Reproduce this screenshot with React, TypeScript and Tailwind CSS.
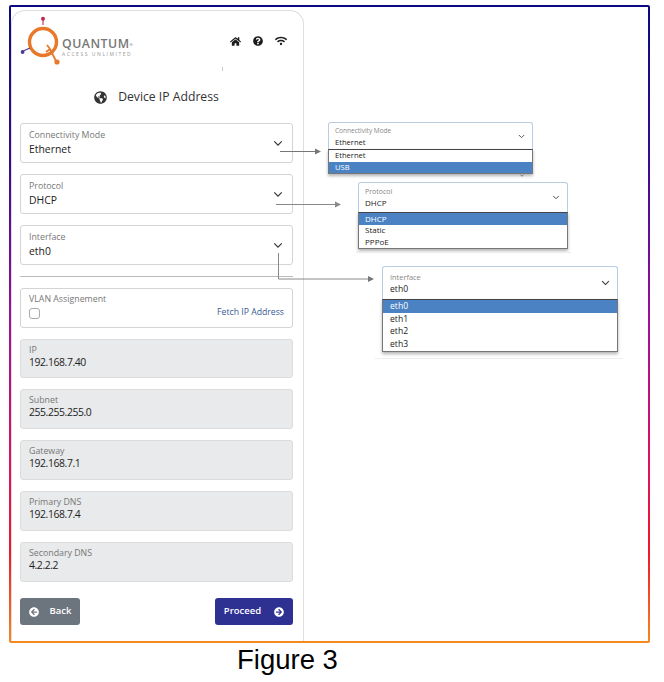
import React from 'react';
import { FaHome, FaQuestionCircle, FaWifi, FaGlobeAmericas, FaArrowCircleLeft, FaArrowCircleRight } from 'react-icons/fa';

const font = { fontFamily: '"Open Sans", sans-serif' };

const Chevron = ({ className }: { className: string }) => (
  <svg className={className} viewBox="0 0 12 8" fill="none" stroke="#333" strokeWidth="1.4">
    <path d="M1.5 1.5 6 6l4.5-4.5" />
  </svg>
);

const SelectField = ({ label, value }: { label: string; value: string }) => (
  <div className="h-10 rounded-[3px] border border-[#d4d4d4] bg-white pl-[8px] pr-[9px] flex items-center justify-between">
    <div>
      <div className="text-[8.8px] leading-[12px] text-[#777]">{label}</div>
      <div className="mt-[1px] text-[10.4px] leading-[15px] text-[#222]">{value}</div>
    </div>
    <Chevron className="w-[10px] h-[7px]" />
  </div>
);

const ReadField = ({ label, value, first }: { label: string; value: string; first?: boolean }) => (
  <div className={`${first ? 'h-[39px]' : 'h-10'} rounded-[3px] border border-[#dcdcdc] bg-[#e8eaeb] pl-[8px] pt-[4px]`}>
    <div className="text-[8.8px] leading-[12px] text-[#777]">{label}</div>
    <div className="text-[10.4px] leading-[12px] tracking-[-0.4px] text-[#222]">{value}</div>
  </div>
);

const Callout = ({
  className,
  label,
  value,
  options,
  active,
  head,
  row,
  pad,
  labelText,
  valueText,
  chevron,
  children,
}: {
  className: string;
  label: string;
  value: string;
  options: string[];
  active: string;
  head: string;
  row: string;
  pad: string;
  labelText: string;
  valueText: string;
  chevron: string;
  children?: React.ReactNode;
}) => (
  <div className={`absolute ${className}`}>
    <div className={`${head} ${pad} rounded-t-[3px] border border-[#b9cde2] border-b-0 bg-white pr-[7px] flex items-center justify-between`}>
      <div>
        <div className={`${labelText} leading-[11px] text-[#888]`}>{label}</div>
        <div className={`${valueText} leading-[12px] text-[#222]`}>{value}</div>
      </div>
      <Chevron className={chevron} />
    </div>
    <div className="border border-[#777] border-t-[#444] bg-white shadow-[0_2px_3px_rgba(0,0,0,0.3)]">
      {options.map((o) => (
        <div
          key={o}
          className={`${row} ${pad} ${valueText} flex items-center ${o === active ? 'bg-[#4a82c3] text-white' : 'text-[#222]'}`}
        >
          {o}
        </div>
      ))}
    </div>
    {children}
  </div>
);

const App: React.FC = () => {
  return (
    <div className="relative w-[664px] h-[682px] bg-white overflow-hidden" style={font}>
      {/* gradient frame */}
      <div className="ml-[9px] mt-[5px] w-[641px] h-[638px] p-[2px] rounded-[2px] bg-[linear-gradient(to_bottom,#0a0a80_0%,#3a0a90_25%,#a0109a_50%,#e01060_72%,#f01828_86%,#f58a20_100%)]">
        <div className="w-full h-full bg-white pt-[3px]">
          {/* device panel */}
          <div className="w-[293px] h-full rounded-t-[14px] border-t border-r border-l border-[#dedede] pl-[8px] pr-[10px] flex flex-col">
            <div className="relative h-[71px] flex items-start justify-between">
              <div className="flex items-start">
                <svg width="42" height="52" viewBox="0 0 42 52" className="mt-[5px]">
                  <path d="M23 2v7" stroke="#c43b5a" strokeWidth="1.2" />
                  <circle cx="23" cy="2.8" r="2" fill="#c2264f" />
                  <circle cx="23" cy="26" r="13.5" fill="none" stroke="#e8792b" strokeWidth="3.4" />
                  <path d="M2 35.5 10 32" stroke="#4b3a90" strokeWidth="1.2" />
                  <circle cx="2.6" cy="36" r="1.9" fill="#4a3a9a" />
                  <path d="M27 29l3 4 6 12M30 33l-4 3" stroke="#e8792b" strokeWidth="1.8" fill="none" />
                  <circle cx="37" cy="46" r="2.6" fill="#e8792b" />
                </svg>
                <div className="mt-[25px]">
                  <div className="text-[12.3px] leading-[15px] tracking-[0.5px] font-semibold text-[#777]">
                    QUANTUM<sup className="text-[4px]">®</sup>
                  </div>
                  <div className="text-[5px] leading-[7px] tracking-[1.55px] text-[#999] whitespace-nowrap">ACCESS UNLIMITED</div>
                </div>
              </div>
              <div className="flex items-center gap-[12px] mt-[24px] mr-[6px] text-[#1c1c1c]">
                <FaHome size={11} />
                <FaQuestionCircle size={10} />
                <FaWifi size={12} />
              </div>
              <div className="absolute left-[202px] top-[56px] w-px h-[4px] bg-[#ccc]" />
            </div>
            <div className="h-[31px] flex items-center justify-center gap-[11px] text-[#333]">
              <FaGlobeAmericas size={13} />
              <span className="text-[12.2px]">Device IP Address</span>
            </div>
            <div className="mt-[10px] flex flex-col gap-[11px]">
              <SelectField label="Connectivity Mode" value="Ethernet" />
              <SelectField label="Protocol" value="DHCP" />
              <SelectField label="Interface" value="eth0" />
            </div>
            <div className="mt-[11px] border-t border-[#bbb]" />
            <div className="mt-[11px] h-10 rounded-[3px] border border-[#d4d4d4] pl-[8px] pr-[8px] pt-[4px] flex justify-between">
              <div>
                <div className="text-[8.8px] leading-[12px] text-[#777]">VLAN Assignement</div>
                <div className="mt-[3px] w-[11px] h-[11px] rounded-[3px] border border-[#aaa]" />
              </div>
              <span className="mt-[13px] text-[8.7px] leading-[12px] text-[#3a5a94]">Fetch IP Address</span>
            </div>
            <div className="mt-[11px] flex flex-col gap-[11px]">
              <ReadField first label="IP" value="192.168.7.40" />
              <ReadField label="Subnet" value="255.255.255.0" />
              <ReadField label="Gateway" value="192.168.7.1" />
              <ReadField label="Primary DNS" value="192.168.7.4" />
              <ReadField label="Secondary DNS" value="4.2.2.2" />
            </div>
            <div className="mt-[16px] flex items-center justify-between">
              <button className="w-[60px] h-[27px] rounded-[3px] bg-[#6c757d] text-white text-[9.5px] font-semibold flex items-center justify-center gap-[11px]">
                <FaArrowCircleLeft size={10} />
                Back
              </button>
              <button className="w-[78px] h-[27px] rounded-[3px] bg-[#2e3192] text-white text-[9.5px] font-semibold flex items-center justify-center gap-[13px]">
                Proceed
                <FaArrowCircleRight size={10} />
              </button>
            </div>
          </div>
        </div>
      </div>

      {/* connector arrows */}
      <svg className="absolute left-0 top-0" width="664" height="682" fill="none">
        <path d="M280 151.5h36" stroke="#777" />
        <path d="M315 148.5l6 3-6 3z" fill="#777" />
        <path d="M276 204.5h59" stroke="#888" />
        <path d="M335 201.5l6 3-6 3z" fill="#888" />
        <path d="M278.5 253v26h90" stroke="#888" />
        <path d="M368 276l6 3-6 3z" fill="#777" />
      </svg>

      {/* dropdown callouts */}
      <Callout
        className="left-[328px] top-[122px] w-[205px]"
        label="Connectivity Mode"
        value="Ethernet"
        options={['Ethernet', 'USB']}
        active="USB"
        head="h-[27px]"
        row="h-[11.5px]"
        pad="pl-[6px]"
        labelText="text-[6.5px]"
        valueText="text-[7.6px]"
        chevron="w-[7px] h-[5px]"
      >
        <Chevron className="absolute left-[191px] top-[52px] w-[6px] h-[3px]" />
      </Callout>
      <Callout
        className="left-[358px] top-[182px] w-[210px]"
        label="Protocol"
        value="DHCP"
        options={['DHCP', 'Static', 'PPPoE']}
        active="DHCP"
        head="h-[30px]"
        row="h-[11.5px]"
        pad="pl-[6px]"
        labelText="text-[7px]"
        valueText="text-[8px]"
        chevron="w-[8px] h-[5px]"
      >
        <div className="absolute -left-[2px] top-[70px] w-[215px] h-px bg-[#eeeeee]" />
      </Callout>
      <Callout
        className="left-[382px] top-[266px] w-[236px]"
        label="Interface"
        value="eth0"
        options={['eth0', 'eth1', 'eth2', 'eth3']}
        active="eth0"
        head="h-[33px]"
        row="h-[12.75px]"
        pad="pl-[7px]"
        labelText="text-[7.4px]"
        valueText="text-[8.6px]"
        chevron="w-[9px] h-[6px]"
      >
        <div className="absolute -left-[7px] top-[92px] w-[248px] h-px bg-[#eeeeee]" />
      </Callout>

      <div
        className="absolute left-[237px] top-[644px] text-[27.5px] leading-[32px] text-black"
        style={{ fontFamily: '"Liberation Sans", sans-serif' }}
      >
        Figure 3
      </div>
    </div>
  );
};

export default App;
